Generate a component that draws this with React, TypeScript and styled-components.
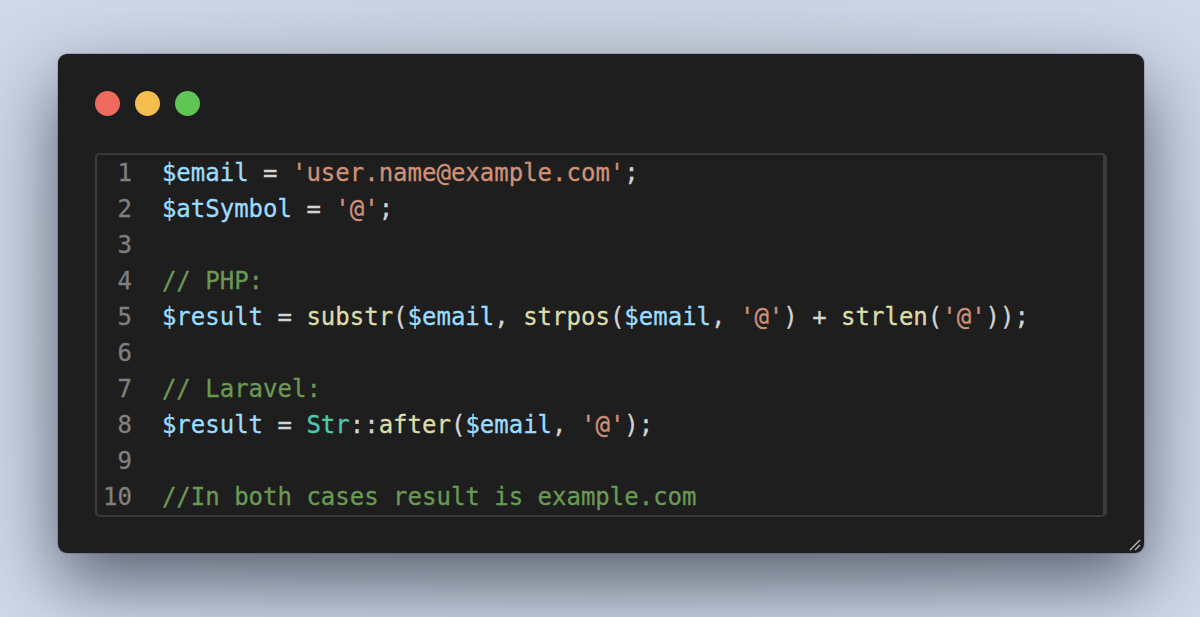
import React from "react";
import styled, { createGlobalStyle } from "styled-components";

const Global = createGlobalStyle`
  html, body { margin: 0; padding: 0; }
  body {
    width: 1200px;
    height: 617px;
    overflow: hidden;
    background: radial-gradient(ellipse at 50% 50%, #bfc7d5 0%, #c6cfdd 55%, #cfd9ea 100%);
    font-family: "DejaVu Sans Mono", "Liberation Mono", monospace;
  }
`;

const Stage = styled.div`
  display: flex;
  justify-content: center;
  align-items: flex-start;
  padding: 54px 0 0 2px;
  height: 617px;
  box-sizing: border-box;
`;

const Window = styled.div`
  position: relative;
  width: 1086px;
  box-sizing: border-box;
  background: #1e1e1e;
  border-radius: 9px;
  padding: 37px 37px 36px 37px;
  box-shadow: 0 30px 70px rgba(25, 30, 45, 0.62), 0 0 0 1px rgba(0, 0, 0, 0.15);
`;

const Lights = styled.div`
  display: flex;
  gap: 15px;
`;

const Light = styled.span<{ $c: string }>`
  width: 25px;
  height: 25px;
  border-radius: 50%;
  background: ${(p) => p.$c};
`;

const CodeBox = styled.div`
  margin-top: 37px;
  border: 2px solid #3a3a3a;
  border-right-width: 4px;
  border-radius: 5px;
  padding: 0;
`;

const Line = styled.div`
  display: flex;
  height: 36px;
  align-items: center;
  font-size: 24px;
  white-space: pre;
  color: #d4d4d4;
  -webkit-text-stroke: 0.3px currentColor;
`;

const Gutter = styled.span`
  display: inline-block;
  width: 2ch;
  padding-left: 6px;
  margin-right: 30px;
  text-align: right;
  color: #808080;
`;

const Tok = styled.span<{ $t: string }>`
  color: ${(p) =>
    ({
      v: "#9cdcfe",
      s: "#ce9178",
      c: "#6a9955",
      f: "#dcdcaa",
      k: "#4ec9b0",
      p: "#d4d4d4",
    } as Record<string, string>)[p.$t]};
`;

const Grip = styled.svg`
  position: absolute;
  right: 2px;
  bottom: 1px;
`;

type T = [string, string];

const lines: T[][] = [
  [["v", "$email"], ["p", " = "], ["s", "'user.name@example.com'"], ["p", ";"]],
  [["v", "$atSymbol"], ["p", " = "], ["s", "'@'"], ["p", ";"]],
  [],
  [["c", "// PHP:"]],
  [
    ["v", "$result"], ["p", " = "], ["f", "substr"], ["p", "("], ["v", "$email"], ["p", ", "],
    ["f", "strpos"], ["p", "("], ["v", "$email"], ["p", ", "], ["s", "'@'"], ["p", ") + "],
    ["f", "strlen"], ["p", "("], ["s", "'@'"], ["p", "));"],
  ],
  [],
  [["c", "// Laravel:"]],
  [
    ["v", "$result"], ["p", " = "], ["k", "Str"], ["p", "::"], ["f", "after"], ["p", "("],
    ["v", "$email"], ["p", ", "], ["s", "'@'"], ["p", ");"],
  ],
  [],
  [["c", "//In both cases result is example.com"]],
];

export default function App() {
  return (
    <>
      <Global />
      <Stage>
        <Window>
          <Lights>
            <Light $c="#ed6a5e" />
            <Light $c="#f5bf4f" />
            <Light $c="#61c554" />
          </Lights>
          <CodeBox>
            {lines.map((toks, i) => (
              <Line key={i}>
                <Gutter>{i + 1}</Gutter>
                {toks.map(([t, s], j) => (
                  <Tok key={j} $t={t}>
                    {s}
                  </Tok>
                ))}
              </Line>
            ))}
          </CodeBox>
          <Grip width="14" height="14" viewBox="0 0 14 14">
            <line x1="2" y1="12" x2="12" y2="2" stroke="#bdbdbd" strokeWidth="1.3" />
            <line x1="7" y1="12" x2="12" y2="7" stroke="#bdbdbd" strokeWidth="1.3" />
          </Grip>
        </Window>
      </Stage>
    </>
  );
}
